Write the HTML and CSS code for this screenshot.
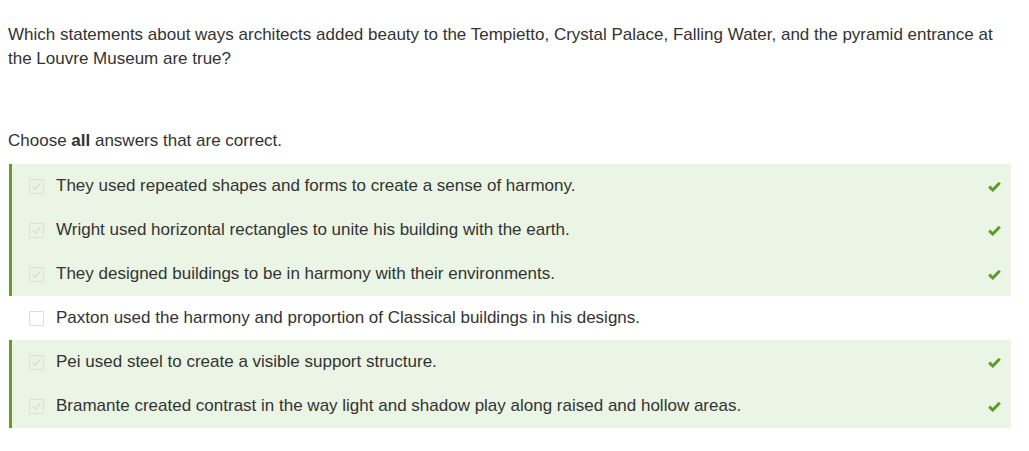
FILE: index.html
```html
<!DOCTYPE html>
<html>
<head>
<meta charset="utf-8">
<link rel="stylesheet" href="styles.css">
</head>
<body>
<div class="quiz">
  <p class="question">Which statements about ways architects added beauty to the Tempietto, Crystal Palace, Falling Water, and the pyramid entrance at the Louvre Museum are true?</p>
  <p class="instruction">Choose <b>all</b> answers that are correct.</p>
  <ul class="answers">
    <li class="answer correct"><span class="box"><svg viewBox="0 0 15 15" width="15" height="15"><path d="M3.5 7.5 L6.2 10.2 L11.5 4.2" fill="none" stroke="#d3e3c9" stroke-width="1.3"/></svg></span><span class="label">They used repeated shapes and forms to create a sense of harmony.</span><span class="tick"><svg viewBox="0 0 13 11" width="13" height="11"><path d="M1.2 5.6 L4.8 9 L11.8 1.8" fill="none" stroke="#5f9b2b" stroke-width="3"/></svg></span></li>
    <li class="answer correct"><span class="box"><svg viewBox="0 0 15 15" width="15" height="15"><path d="M3.5 7.5 L6.2 10.2 L11.5 4.2" fill="none" stroke="#d3e3c9" stroke-width="1.3"/></svg></span><span class="label">Wright used horizontal rectangles to unite his building with the earth.</span><span class="tick"><svg viewBox="0 0 13 11" width="13" height="11"><path d="M1.2 5.6 L4.8 9 L11.8 1.8" fill="none" stroke="#5f9b2b" stroke-width="3"/></svg></span></li>
    <li class="answer correct"><span class="box"><svg viewBox="0 0 15 15" width="15" height="15"><path d="M3.5 7.5 L6.2 10.2 L11.5 4.2" fill="none" stroke="#d3e3c9" stroke-width="1.3"/></svg></span><span class="label">They designed buildings to be in harmony with their environments.</span><span class="tick"><svg viewBox="0 0 13 11" width="13" height="11"><path d="M1.2 5.6 L4.8 9 L11.8 1.8" fill="none" stroke="#5f9b2b" stroke-width="3"/></svg></span></li>
    <li class="answer"><span class="box"></span><span class="label">Paxton used the harmony and proportion of Classical buildings in his designs.</span></li>
    <li class="answer correct"><span class="box"><svg viewBox="0 0 15 15" width="15" height="15"><path d="M3.5 7.5 L6.2 10.2 L11.5 4.2" fill="none" stroke="#d3e3c9" stroke-width="1.3"/></svg></span><span class="label">Pei used steel to create a visible support structure.</span><span class="tick"><svg viewBox="0 0 13 11" width="13" height="11"><path d="M1.2 5.6 L4.8 9 L11.8 1.8" fill="none" stroke="#5f9b2b" stroke-width="3"/></svg></span></li>
    <li class="answer correct"><span class="box"><svg viewBox="0 0 15 15" width="15" height="15"><path d="M3.5 7.5 L6.2 10.2 L11.5 4.2" fill="none" stroke="#d3e3c9" stroke-width="1.3"/></svg></span><span class="label">Bramante created contrast in the way light and shadow play along raised and hollow areas.</span><span class="tick"><svg viewBox="0 0 13 11" width="13" height="11"><path d="M1.2 5.6 L4.8 9 L11.8 1.8" fill="none" stroke="#5f9b2b" stroke-width="3"/></svg></span></li>
  </ul>
</div>
</body>
</html>
```
FILE: styles.css
```css
html, body {
  margin: 0;
  padding: 0;
  background: #ffffff;
}
body {
  font-family: "Liberation Sans", Arial, sans-serif;
  font-size: 17px;
  color: #333333;
}
.quiz {
  padding: 23px 18px 0 8px;
}
.question {
  margin: 0;
  line-height: 24px;
}
.instruction {
  margin: 58px 0 11px 0;
  line-height: 24px;
}
.instruction b {
  font-weight: bold;
}
.answers {
  list-style: none;
  margin: 0 0 0 1px;
  padding: 0;
}
.answer {
  display: flex;
  align-items: center;
  height: 44px;
  box-sizing: border-box;
  padding: 0 10px 0 17px;
  border-left: 3px solid transparent;
}
.answer.correct {
  background: #ebf5e5;
  border-left-color: #6b9c2b;
}
.box {
  width: 15px;
  height: 15px;
  box-sizing: border-box;
  border: 1px solid #dedede;
  background: #ffffff;
  margin-right: 12px;
  display: flex;
  align-items: center;
  justify-content: center;
  flex: none;
}
.correct .box {
  border-color: #d6e6cc;
  background: #eaf4e3;
}
.box svg {
  display: block;
  margin: -1px;
}
.label {
  flex: 1;
  line-height: 20px;
}
.tick {
  display: flex;
  flex: none;
}
.tick svg {
  display: block;
}
```
